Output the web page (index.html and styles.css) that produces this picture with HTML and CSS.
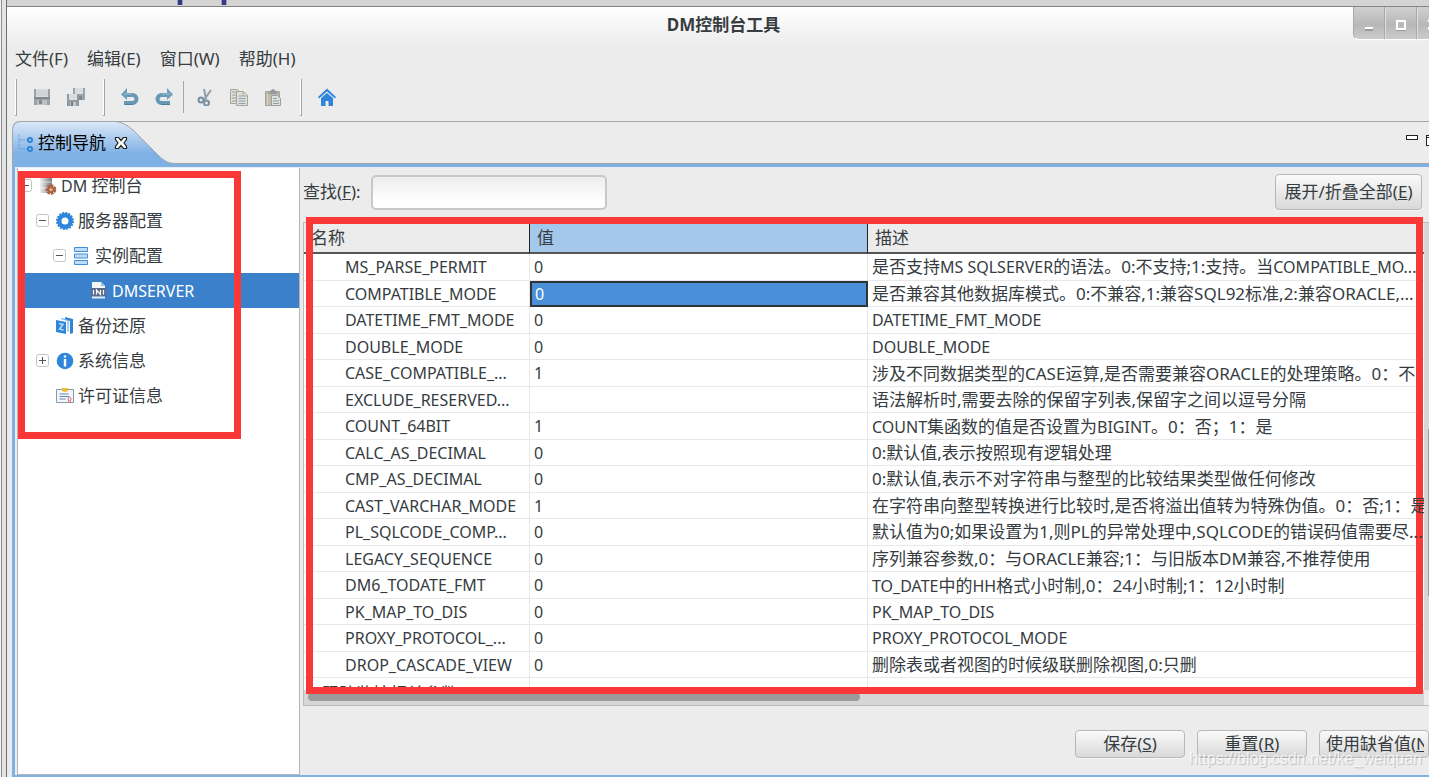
FILE: index.html
```html
<!DOCTYPE html>
<html lang="zh-CN">
<head>
<meta charset="utf-8">
<title>DM控制台工具</title>
<link rel="stylesheet" href="styles.css">
</head>
<body>
<div class="edge"></div>
<div class="desktop">
  <div class="backdrop"><i class="speck"></i><i class="speck"></i></div>
  <div class="window">
    <header class="titlebar">
      <h1 class="title">DM控制台工具</h1>
      <div class="winctl">
        <button type="button" aria-label="最小化"><svg width="30" height="31" viewBox="0 0 30 31"><path d="M11 22h8" stroke="#999" stroke-width="2"/><path d="M11 20h8" stroke="#fff" stroke-width="2"/></svg></button>
        <button type="button" aria-label="最大化"><svg width="30" height="31" viewBox="0 0 30 31"><path d="M10 22.500h10" stroke="#999"/><rect x="11" y="13" width="8" height="8" fill="none" stroke="#fff" stroke-width="2"/></svg></button>
        <button type="button" aria-label="关闭"><svg width="30" height="31" viewBox="0 0 30 31"><path d="M10 12l9 9M19 12l-9 9" stroke="#fff" stroke-width="2"/></svg></button>
      </div>
    </header>
    <nav class="menubar">
      <button type="button">文件(F)</button><button type="button">编辑(E)</button><button type="button">窗口(W)</button><button type="button">帮助(H)</button>
    </nav>
    <div class="toolbar">
      <i class="handle"></i>
      <button type="button" aria-label="保存"><svg width="18" height="18" viewBox="0 0 18 18"><path d="M1 1h16v16H1z" fill="#9aa3a9"/><path d="M3 1h12v8H3z" fill="#dcdedd"/><path d="M3 3h12M3 5h12M3 7h12" stroke="#c6cacb"/><path d="M1 10h16" stroke="#7f8a93" stroke-width="2"/><path d="M4 12h10v5H4z" fill="#bcc2c6"/><path d="M6 12h3v4H6z" fill="#7d8892"/></svg></button>
      <button type="button" aria-label="全部保存"><svg width="18" height="18" viewBox="0 0 18 18"><path d="M6 0h12v12H6z" fill="#9aa3a9"/><path d="M8 0h8v6H8z" fill="#dadcdd"/><path d="M9 8h6v4H9z" fill="#7f8a93"/><path d="M0 6h12v12H0z" fill="#8f999f"/><path d="M2 6h8v6H2z" fill="#dadcdd"/><path d="M3 14h6v4H3z" fill="#c0c6ca"/><path d="M4 14h2v4H4z" fill="#6f7b86"/></svg></button>
      <i class="handle later"></i>
      <button type="button" aria-label="撤销"><svg width="18" height="18" viewBox="0 0 18 18"><path d="M3 15h8.500a4 4 0 0 0 0-8H6" fill="none" stroke="#6798b5" stroke-width="4"/><path d="M0 6.500L6 0v12z" fill="#719fba"/><path d="M4 16.500h8" stroke="#4e7e9d"/><path d="M3 6h8" stroke="#9bbdce"/></svg></button>
      <button type="button" aria-label="重做"><svg width="18" height="18" viewBox="0 0 18 18"><path d="M15 15H6.500a4 4 0 0 1 0-8H12" fill="none" stroke="#6798b5" stroke-width="4"/><path d="M18 6.500L12 0v12z" fill="#719fba"/><path d="M6 16.500h9" stroke="#4e7e9d"/><path d="M7 6h8" stroke="#9bbdce"/></svg></button>
      <i class="rule"></i>
      <button type="button" aria-label="剪切"><svg width="18" height="18" viewBox="0 0 18 18"><path d="M8 1l2 10M15 2L8 12" stroke="#919da7" stroke-width="2"/><circle cx="5" cy="12" r="2.500" fill="#dfe5e8" stroke="#7890a2" stroke-width="2"/><circle cx="10.500" cy="15" r="2.500" fill="#dfe5e8" stroke="#7890a2" stroke-width="2"/></svg></button>
      <button type="button" aria-label="复制"><svg width="18" height="18" viewBox="0 0 18 18"><path d="M.5 1.500h7l3 3v11H.5z" fill="#dddeda" stroke="#aaa58f"/><path d="M2 4h6M2 7h7M2 10h7M2 13h6" stroke="#98a1a5"/><path d="M6.500 3.500h7l4 4v10h-11z" fill="#dfe1df" stroke="#a6a492"/><path d="M13 4v4h4" fill="none" stroke="#a6a492"/><path d="M8.500 8h4M8.500 10.500h7M8.500 13h7M8.500 15.500h7" stroke="#929da4"/></svg></button>
      <button type="button" aria-label="粘贴"><svg width="18" height="18" viewBox="0 0 18 18"><path d="M1.500 3.500h14v14h-14z" fill="#c2bbac" stroke="#a8a294"/><path d="M4 6l3-4 2-1 2 1 3 4z" fill="#929ba1"/><path d="M3.500 7v10" stroke="#d6d1c6"/><path d="M7.500 7.500h6l3 3v7h-9z" fill="#dfe1e1" stroke="#98a0a4"/><path d="M9 10.500h4M9 13h6M9 15.500h6" stroke="#929da4"/></svg></button>
      <i class="handle later"></i>
      <button type="button" aria-label="主页"><svg width="18" height="18" viewBox="0 0 18 18"><path d="M0 9L9 .5 18 9l-1 1.500-8-7-8 7z" fill="#2f86d9"/><path d="M3 10l6-5 6 5v8h-4.500v-5h-3v5H3z" fill="#2f86d9"/></svg></button>
    </div>

    <main class="view">
      <div class="tabstrip">
        <div class="tab">
          <svg class="tabshape" width="162" height="46" viewBox="0 0 162 46" aria-hidden="true"><defs><linearGradient id="tabfill" x1="0" y1="0" x2="0" y2="1"><stop offset="0" stop-color="#dce8f8"/><stop offset=".7" stop-color="#80b1e5"/><stop offset="1" stop-color="#7fb0e6"/></linearGradient></defs><path d="M0 46V8Q1 .5 9 .5H103Q112 1 121 9L146 34Q155 43 162 43V46z" fill="url(#tabfill)"/><path d="M.5 46V9Q1 .5 9 .5H103Q112 1 121 9L146 34Q154 42.500 162 42.500" fill="none" stroke="#a2a6aa"/></svg>
          <svg class="tabicon" width="16" height="18" viewBox="0 0 16 18" aria-hidden="true"><path d="M1 1v14M2 6h7M2 15h7" fill="none" stroke="#5b9fdc" stroke-dasharray="2 1"/><circle cx="12" cy="6" r="2" fill="#b8d7f5" stroke="#2b83d5" stroke-width="2"/><circle cx="12" cy="15" r="2" fill="#b8d7f5" stroke="#2b83d5" stroke-width="2"/></svg>
          <span class="tabname">控制导航</span>
          <button type="button" class="tabclose" aria-label="关闭"><svg width="14" height="14" viewBox="0 0 14 14"><path d="M1.500 1.500h3l2.500 3 2.500-3h3v2L10 7l2.500 3.500v2h-3L7 9.500l-2.500 3h-3v-2L4 7 1.500 3.500z" fill="#fff" stroke="#222" stroke-width="1.200"/></svg></button>
        </div>
        <div class="viewctl">
          <svg width="23" height="14" viewBox="0 0 23 14" aria-hidden="true"><rect x=".5" y="2.500" width="11" height="4" fill="#fff" stroke="#222"/><rect x="20.500" y="2.500" width="11" height="10" fill="#fff" stroke="#222"/><path d="M21 4.500h4" stroke="#222"/></svg>
        </div>
      </div>
      <div class="panes">
        <ul class="tree" role="tree">
          <li class="node l0" role="treeitem"><svg class="exp" width="13" height="13" viewBox="0 0 13 13"><rect x=".5" y=".5" width="12" height="12" rx="2" fill="#fff" stroke="#c5c5c5"/><path d="M3 6.500h7" stroke="#555"/></svg><svg width="18" height="18" viewBox="0 0 18 18"><defs><linearGradient id="srv"><stop offset="0" stop-color="#f0f0f0"/><stop offset="1" stop-color="#777"/></linearGradient></defs><path d="M1 0h12v16H1z" fill="url(#srv)"/><path d="M1 5h12M1 11h12" stroke="#fff" stroke-opacity=".6"/><circle cx="12" cy="12.500" r="3.500" fill="#b96c4d" stroke="#a9603f" stroke-width="3.500" stroke-dasharray="2.400 .74"/><circle cx="12" cy="12.500" r="1.500" fill="#e2b7a4"/></svg><span><span class="latin">DM</span> 控制台</span></li>
          <li class="node l1" role="treeitem"><svg class="exp" width="13" height="13" viewBox="0 0 13 13"><rect x=".5" y=".5" width="12" height="12" rx="2" fill="#fff" stroke="#c5c5c5"/><path d="M3 6.500h7" stroke="#555"/></svg><svg width="18" height="18" viewBox="0 0 18 18"><circle cx="9" cy="9" r="5.700" fill="none" stroke="#2f86d9" stroke-width="4.400"/><circle cx="9" cy="9" r="8" fill="none" stroke="#2f86d9" stroke-width="2" stroke-dasharray="2 1.142"/></svg><span>服务器配置</span></li>
          <li class="node l2" role="treeitem"><svg class="exp" width="13" height="13" viewBox="0 0 13 13"><rect x=".5" y=".5" width="12" height="12" rx="2" fill="#fff" stroke="#c5c5c5"/><path d="M3 6.500h7" stroke="#555"/></svg><svg width="18" height="20" viewBox="0 0 18 20"><path d="M1.500 1.500h13v4h-13zM1.500 8h13v4h-13zM1.500 14.500h13v4h-13z" fill="#bedcf8" stroke="#408ed8"/></svg><span>实例配置</span></li>
          <li class="node l3 selected" role="treeitem" aria-selected="true"><svg width="18" height="18" viewBox="0 0 18 18"><path d="M2 0h9l4 4v3H2z" fill="#f3f5f7"/><path d="M11 0v4h4z" fill="#9fc0dd"/><path d="M1 6h15v8H1z" fill="#5b6b8b"/><path d="M3.500 8v4.500M6.500 12.500V8l4 4.500V8M13.500 8v4.500" fill="none" stroke="#fff" stroke-width="1.200"/><path d="M2 15.500h13" stroke="#e6e9ec" stroke-width="2"/></svg><span>DMSERVER</span></li>
          <li class="node l1 leaf" role="treeitem"><svg width="18" height="18" viewBox="0 0 18 18"><path d="M0 3l10 2v12L0 15z" fill="#2f86d9"/><path d="M5 1.500l7 2v11" fill="none" stroke="#6fb0ea" stroke-width="1.200"/><path d="M9 0l8 2v14l-3 1V4L9 2z" fill="#2f86d9"/><path d="M3 6.500l4 1-3.500 4.500 4 1" fill="none" stroke="#b8dbf7" stroke-width="1.500"/></svg><span>备份还原</span></li>
          <li class="node l1" role="treeitem"><svg class="exp" width="13" height="13" viewBox="0 0 13 13"><rect x=".5" y=".5" width="12" height="12" rx="2" fill="#fff" stroke="#c5c5c5"/><path d="M3 6.500h7M6.500 3v7" stroke="#555"/></svg><svg width="18" height="18" viewBox="0 0 18 18"><circle cx="9" cy="9" r="8.300" fill="#2f86d9"/><circle cx="9" cy="4.500" r="1.300" fill="#fff"/><path d="M9 7v7.500" stroke="#fff" stroke-width="2.400"/></svg><span>系统信息</span></li>
          <li class="node l1 leaf" role="treeitem"><svg width="18" height="18" viewBox="0 0 18 18"><path d="M.5 2.500h17v13H.5z" fill="#f3f7fa" stroke="#8798a9"/><path d="M6 1h6v3l-3 1-3-1z" fill="#efbd35"/><path d="M3.500 7h9M3.500 9.500h10M3.500 12h6" stroke="#5f88b4"/><circle cx="13.500" cy="12" r="1.500" fill="#fff" stroke="#df6d77"/><path d="M12.500 13.500v2M14.500 13.500v2" stroke="#df6d77"/></svg><span>许可证信息</span></li>
          <li class="callout" aria-hidden="true"></li>
        </ul>

        <section class="content">
          <form class="search">
            <label for="find">查找(<u>F</u>):</label>
            <input id="find" type="text">
            <button type="button" class="btn expand">展开/折叠全部(<u>E</u>)</button>
          </form>
          <div class="gridframe">
            <div class="gridview">
              <table class="params">
                <colgroup><col class="cname"><col class="cvalue"><col></colgroup>
                <thead><tr><th>名称</th><th class="sorted">值</th><th>描述</th></tr></thead>
                <tbody>
                  <tr><td>MS_PARSE_PERMIT</td><td>0</td><td>是否支持<span class="latin">MS SQLSERVER</span>的语法。0:不支持;1:支持。当<span class="latin">COMPATIBLE_MO...</span></td></tr>
                  <tr><td>COMPATIBLE_MODE</td><td class="active">0</td><td>是否兼容其他数据库模式。0:不兼容,1:兼容SQL92标准,2:兼容ORACLE,...</td></tr>
                  <tr><td>DATETIME_FMT_MODE</td><td>0</td><td class="latin">DATETIME_FMT_MODE</td></tr>
                  <tr><td>DOUBLE_MODE</td><td>0</td><td class="latin">DOUBLE_MODE</td></tr>
                  <tr><td>CASE_COMPATIBLE_...</td><td>1</td><td>涉及不同数据类型的CASE运算,是否需要兼容ORACLE的处理策略。0<span class="wide">：</span>不</td></tr>
                  <tr><td>EXCLUDE_RESERVED...</td><td></td><td>语法解析时,需要去除的保留字列表,保留字之间以逗号分隔</td></tr>
                  <tr><td>COUNT_64BIT</td><td>1</td><td><span class="latin">COUNT</span>集函数的值是否设置为<span class="latin">BIGINT</span>。0<span class="wide">：</span>否<span class="wide">；</span>1<span class="wide">：</span>是</td></tr>
                  <tr><td>CALC_AS_DECIMAL</td><td>0</td><td>0:默认值,表示按照现有逻辑处理</td></tr>
                  <tr><td>CMP_AS_DECIMAL</td><td>0</td><td>0:默认值,表示不对字符串与整型的比较结果类型做任何修改</td></tr>
                  <tr><td>CAST_VARCHAR_MODE</td><td>1</td><td><span class="above">在字符串向整型转换进行比较时,是否将溢出值转为特殊伪值。0<span class="wide">：</span>否;1<span class="wide">：</span>是</span></td></tr>
                  <tr><td>PL_SQLCODE_COMP...</td><td>0</td><td><span class="above">默认值为0;如果设置为1,则PL的异常处理中,SQLCODE的错误码值需要尽...</span></td></tr>
                  <tr><td>LEGACY_SEQUENCE</td><td>0</td><td>序列兼容参数,0<span class="wide">：</span>与ORACLE兼容;1<span class="wide">：</span>与旧版本DM兼容,不推荐使用</td></tr>
                  <tr><td>DM6_TODATE_FMT</td><td>0</td><td><span class="latin">TO_DATE</span>中的<span class="latin">HH</span>格式小时制,0<span class="wide">：</span>24小时制;1<span class="wide">：</span>12小时制</td></tr>
                  <tr><td>PK_MAP_TO_DIS</td><td>0</td><td class="latin">PK_MAP_TO_DIS</td></tr>
                  <tr><td>PROXY_PROTOCOL_...</td><td>0</td><td class="latin">PROXY_PROTOCOL_MODE</td></tr>
                  <tr><td>DROP_CASCADE_VIEW</td><td>0</td><td>删除表或者视图的时候级联删除视图,0:只删</td></tr>
                  <tr><td class="group">跟踪监控相关参数</td><td></td><td></td></tr>
                </tbody>
              </table>
            </div>
            <div class="vtrack"><i></i></div>
            <div class="htrack"><i></i></div>
            <div class="callout" aria-hidden="true"></div>
          </div>
          <footer class="actions">
            <button type="button" class="btn">保存(<u>S</u>)</button>
            <button type="button" class="btn">重置(<u>R</u>)</button>
            <button type="button" class="btn cut"><span>使用缺省值(<u>N</u>)</span></button>
            <span class="watermark">https://blog.csdn.net/ke_weiquan</span>
          </footer>
        </section>
      </div>
    </main>
  </div>
</div>
</body>
</html>
```
FILE: styles.css
```css
* { box-sizing: border-box; }
html, body { height: 100%; }
body {
  margin: 0;
  display: flex;
  overflow: hidden;
  background: #ececec;
  color: #363c3f;
  font: 17px/24px "Noto Sans", "Noto Sans CJK SC", sans-serif;
}
button, input { font: inherit; color: inherit; }
button { padding: 0; border: 0; background: none; white-space: nowrap; }
svg { display: block; flex: none; }
.latin { font-size: 16px; }
.wide { font-family: "Noto Sans CJK TC", sans-serif; }

.edge {
  flex: none;
  width: 7px;
  border-right: 1px solid #6e6e6e;
  background: linear-gradient(90deg, #f2f2f2 1px, #8e8e8e 1px 2px, #e2e4e6 2px);
}
.desktop { flex: 1; min-width: 0; display: flex; flex-direction: column; }
.backdrop {
  flex: none;
  display: flex;
  gap: 38px;
  height: 7px;
  padding-left: 170px;
  border-bottom: 1px solid #858585;
  background: #d4d4d4;
}
.speck { width: 6px; height: 5px; border: solid #9da0bd; border-width: 0 1px; background: #353a80; }
.window { flex: 1; min-height: 0; display: flex; flex-direction: column; }

.titlebar {
  flex: none;
  display: grid;
  grid-template-columns: 87px 1fr 76px;
  height: 38px;
  background: linear-gradient(#fff, #ececec);
}
.title { grid-column: 2; margin: 0; text-align: center; font-size: 17px; line-height: 36px; font-weight: 700; }
.winctl {
  display: flex;
  height: 33px;
  overflow: hidden;
  border: solid #aaa;
  border-width: 0 0 0 1px;
  border-bottom: 1px solid #fff;
  border-radius: 0 0 0 6px;
  background: linear-gradient(#d0d0d0, #b8b8b8 55%, #cbcbcb);
}
.winctl button { flex: none; width: 32px; border-right: 1px solid #ddd; box-shadow: inset -1px 0 #aaa; }

.menubar { flex: none; display: flex; gap: 19px; height: 28px; padding-left: 8px; }
.menubar button { line-height: 28px; }

.toolbar { flex: none; display: flex; align-items: center; height: 48px; padding-left: 8px; }
.toolbar button { display: grid; place-items: center; width: 34px; height: 34px; }
.handle { width: 2px; height: 37px; margin-right: 8px; background: linear-gradient(90deg, #fff 1px, #a5a5a5 1px); border-bottom: 1px solid #a5a5a5; }
.handle.later { margin-left: 10px; }
.rule { width: 1px; height: 32px; margin: 0 4px 0 2px; background: #a8a8a8; }

.view { flex: 1; min-height: 0; display: flex; flex-direction: column; margin-left: 5px; }
.tabstrip {
  flex: none;
  display: flex;
  justify-content: space-between;
  height: 43px;
  border: solid #a5a5a5;
  border-width: 1px 0;
  border-top-left-radius: 8px;
}
.tab { position: relative; display: flex; align-items: center; gap: 4px; width: 162px; padding-left: 6px; color: #000; }
.tabshape { position: absolute; left: 0; top: -1px; }
.tabicon, .tabname, .tabclose { position: relative; }
.tabclose { margin-left: 4px; }
.viewctl { padding-top: 11px; }

.panes {
  flex: 1;
  min-height: 0;
  display: flex;
  padding: 1px 0 0 2px;
  border: solid #7fb0e6;
  border-width: 3px 0 2px 3px;
}
.tree {
  position: relative;
  flex: none;
  width: 283px;
  margin: 0;
  padding: 0;
  list-style: none;
  background: #fff;
  border: solid #b5b5b5;
  border-width: 0 1px 1px;
}
.node { display: flex; align-items: center; gap: 4px; height: 35px; }
.exp { margin-right: 3px; }
.l0 { padding-left: 1px; }
.l1 { padding-left: 18px; }
.l1.leaf { padding-left: 38px; }
.l2 { padding-left: 35px; }
.l3 { padding-left: 72px; font-size: 16px; }
.selected { background: #3a80cb; color: #fff; }
.callout { position: absolute; z-index: 2; border: 7px solid #fb3838; pointer-events: none; }
.tree .callout { left: 0; top: 3px; width: 223px; height: 268px; }

.content { flex: 1; min-width: 0; display: flex; flex-direction: column; padding-left: 3px; }
.search { flex: none; display: flex; align-items: center; gap: 10px; margin: 6px 0 12px; padding-right: 7px; }
.search input {
  width: 236px;
  height: 35px;
  padding: 0 8px;
  border: 2px solid #c8c8c8;
  border-radius: 5px;
  background: linear-gradient(#ededed, #fff 80%);
}
.btn {
  flex: none;
  width: 110px;
  height: 28px;
  border: 1px solid #b8b8b8;
  border-radius: 4px;
  background: linear-gradient(#fafafa, #d9d9d9);
  box-shadow: 0 1px #f8f8f8;
  line-height: 24px;
}
.btn.expand { width: 147px; height: 36px; margin-left: auto; }
.btn.cut { padding: 0 4px 0 6px; }
.btn.cut span { display: block; overflow: hidden; text-align: left; }

.gridframe {
  position: relative;
  flex: 1;
  min-height: 0;
  display: grid;
  grid-template: minmax(0, 1fr) 15px / minmax(0, 1fr) 5px;
  border: solid #bcbcbc;
  border-width: 1px 0 1px 1px;
}
.gridframe .callout { inset: -6px 6px 11px 2px; }
.gridview { overflow: hidden; background: #fff; }
.params { width: 100%; table-layout: fixed; border-collapse: separate; border-spacing: 0; }
.cname { width: 226px; }
.cvalue { width: 338px; }
.params th {
  height: 31px;
  padding: 0 7px;
  border-right: 1px solid #222;
  border-bottom: 2px solid #555;
  background: #ececec;
  font-weight: 400;
  text-align: left;
}
.params th:last-child { border-right: 0; }
.params .sorted { background: #a4c7ec; }
.params td {
  height: 27px;
  padding: 0 4px;
  overflow: hidden;
  border: solid #e8e8e8;
  border-width: 0 1px 1px 0;
  line-height: 24px;
  white-space: nowrap;
}
.params tr:nth-child(even) td { height: 26px; }
.params td:first-child { padding: 0 0 0 41px; font-size: 16px; }
.params td:nth-child(2) { font-size: 16px; }
.params td:last-child { border-right: 0; }
.params td.group:first-child { padding: 4px 0 0 18px; font-size: 17px; }
.params td.active { padding-left: 3px; border: 2px solid #2f3436; background: #4a90d9; color: #fff; line-height: 22px; }
.above { position: relative; z-index: 3; }
.vtrack { background: #d6d6d6; padding: 206px 0 0 4px; }
.vtrack i { display: block; height: 167px; background: #999; }
.htrack { background: #d6d6d6; padding: 3px 0 0 4px; }
.htrack i { display: block; width: calc(50% - 6px); height: 8px; border-radius: 4px; background: #9b9b9b; }

.actions {
  position: relative;
  flex: none;
  display: flex;
  justify-content: flex-end;
  gap: 12px;
  padding: 24px 0 17px;
}
.watermark {
  position: absolute;
  right: 7px;
  bottom: 6px;
  font: 16px/20px "Liberation Sans", sans-serif;
  color: rgba(255, 255, 255, .75);
  text-shadow: 1px 1px 1px rgba(120, 120, 120, .4);
}
```
